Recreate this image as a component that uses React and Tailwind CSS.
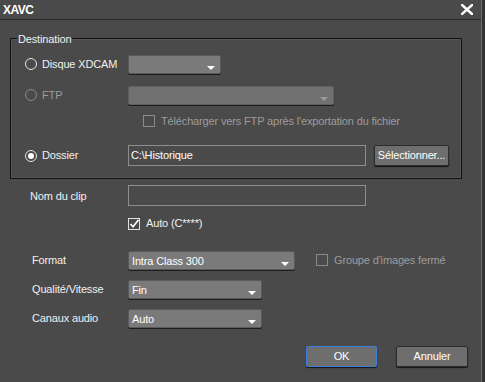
import React from "react";

const font = { fontFamily: '"Liberation Sans", Arial, sans-serif' };

function Radio({ checked, disabled, label }) {
  return (
    <div className="flex items-center">
      <span
        className={`w-[12px] h-[12px] rounded-full border-[1.5px] flex items-center justify-center ${disabled ? "border-[#8a8a8a]" : "border-[#e6e6e6]"}`}
      >
        {checked && <span className="w-[6px] h-[6px] rounded-full bg-white"></span>}
      </span>
      <span className={`ml-[5px] ${disabled ? "text-[#9c9c9c]" : "text-[#f0f0f0]"}`}>{label}</span>
    </div>
  );
}

function Checkbox({ checked, disabled, label }) {
  return (
    <div className="flex items-center">
      <span
        className={`w-[12px] h-[12px] border flex items-center justify-center ${disabled ? "border-[#8a8a8a]" : "border-[#e0e0e0]"}`}
      >
        {checked && (
          <svg width="10" height="10" viewBox="0 0 10 10">
            <path d="M1.5 5 L4 7.8 L9.5 0.8" fill="none" stroke="#ffffff" strokeWidth="1.6" />
          </svg>
        )}
      </span>
      <span className={`ml-[6px] ${disabled ? "text-[#9c9c9c]" : "text-[#f0f0f0]"}`}>{label}</span>
    </div>
  );
}

function Dropdown({ width, value, disabled }) {
  return (
    <div
      className={`${width} h-[19px] rounded-[2px] border flex justify-between shadow-[0_1px_0_#1c1c1c] ${disabled ? "bg-[#717171] border-[#5e5e5e]" : "bg-[#7a7a7a] border-[#5a5a5a]"}`}
    >
      <span className="pl-[3px] leading-[18px] text-white">{value}</span>
      <svg className="self-end mb-[3px] mr-[5px]" width="8" height="4" viewBox="0 0 8 4">
        <path d="M0 0 H8 L4 4 Z" fill={disabled ? "#9a9a9a" : "#ffffff"} />
      </svg>
    </div>
  );
}

function TextBox({ width, value }) {
  return (
    <div className={`${width} h-[21px] border border-[#8e8e8e] bg-[#4a4a4a] pl-[2px] leading-[19px] text-white`}>
      {value}
    </div>
  );
}

function Btn({ width, label, focused }) {
  return (
    <div
      className={`${width} h-[21px] rounded-[2px] border flex items-center justify-center text-white bg-[#6e6e6e] shadow-[0_1px_1px_#141414] ${focused ? "border-[#3c7fdc]" : "border-[#2c2c2c]"}`}
    >
      {label}
    </div>
  );
}

export default function App() {
  return (
    <div className="w-[485px] h-[382px] bg-[#333333] flex overflow-hidden text-[11px] tracking-[-0.15px]" style={font}>
      <div className="w-[482px] h-full bg-[#4a4a4a] border-r border-[#6a6a6a] flex flex-col">
        {/* Title bar */}
        <div className="h-[20px] flex items-center justify-between pl-[3px] pr-[8px] border-b border-[#2a2a2a]">
          <span className="text-white font-bold text-[12px] tracking-[-0.5px]">XAVC</span>
          <svg width="12" height="11" viewBox="0 0 12 11">
            <path d="M1 1 L11 10 M11 1 L1 10" stroke="#ffffff" strokeWidth="2.4" strokeLinecap="square" />
          </svg>
        </div>

        {/* Destination group */}
        <div className="relative ml-[10px] mt-[18px] w-[452px] h-[141px] border border-[#121212] shadow-[inset_0_0_0_1px_#555555] flex flex-col pl-[14px]">
          <span className="absolute left-[6px] -top-[8px] bg-[#4a4a4a] px-[1px] text-[#f0f0f0]">Destination</span>

          <div className="mt-[15px] flex items-center h-[20px]">
            <div className="w-[103px]">
              <Radio label="Disque XDCAM" />
            </div>
            <Dropdown width="w-[93px]" value="" />
          </div>

          <div className="mt-[11px] flex items-center h-[20px]">
            <div className="w-[103px]">
              <Radio label="FTP" disabled />
            </div>
            <Dropdown width="w-[206px]" value="" disabled />
          </div>

          <div className="mt-[9px] h-[14px] flex items-center pl-[118px]">
            <Checkbox disabled label="Télécharger vers FTP après l'exportation du fichier" />
          </div>

          <div className="mt-[17px] flex items-center h-[21px]">
            <div className="w-[103px]">
              <Radio label="Dossier" checked />
            </div>
            <TextBox width="w-[238px]" value="C:\Historique" />
            <div className="ml-[8px]">
              <Btn width="w-[75px]" label="Sélectionner..." />
            </div>
          </div>
        </div>

        {/* Clip name */}
        <div className="mt-[6px] flex items-center h-[21px] pl-[30px]">
          <span className="w-[98px] text-[#f0f0f0] pt-[2px]">Nom du clip</span>
          <TextBox width="w-[238px]" value="" />
        </div>

        <div className="mt-[11px] h-[13px] flex items-center pl-[128px]">
          <Checkbox checked label="Auto (C****)" />
        </div>

        <div className="mt-[20px] flex items-center h-[20px] pl-[32px]">
          <span className="w-[96px] text-[#f0f0f0]">Format</span>
          <Dropdown width="w-[167px]" value="Intra Class 300" />
          <div className="ml-[21px]">
            <Checkbox disabled label="Groupe d'images fermé" />
          </div>
        </div>

        <div className="mt-[9px] flex items-center h-[20px] pl-[32px]">
          <span className="w-[96px] text-[#f0f0f0]">Qualité/Vitesse</span>
          <Dropdown width="w-[134px]" value="Fin" />
        </div>

        <div className="mt-[9px] flex items-center h-[20px] pl-[32px]">
          <span className="w-[96px] text-[#f0f0f0]">Canaux audio</span>
          <Dropdown width="w-[134px]" value="Auto" />
        </div>

        <div className="mt-[18px] flex justify-end gap-[19px] pr-[13px]">
          <Btn width="w-[71px]" label="OK" focused />
          <Btn width="w-[72px]" label="Annuler" />
        </div>
      </div>
    </div>
  );
}
